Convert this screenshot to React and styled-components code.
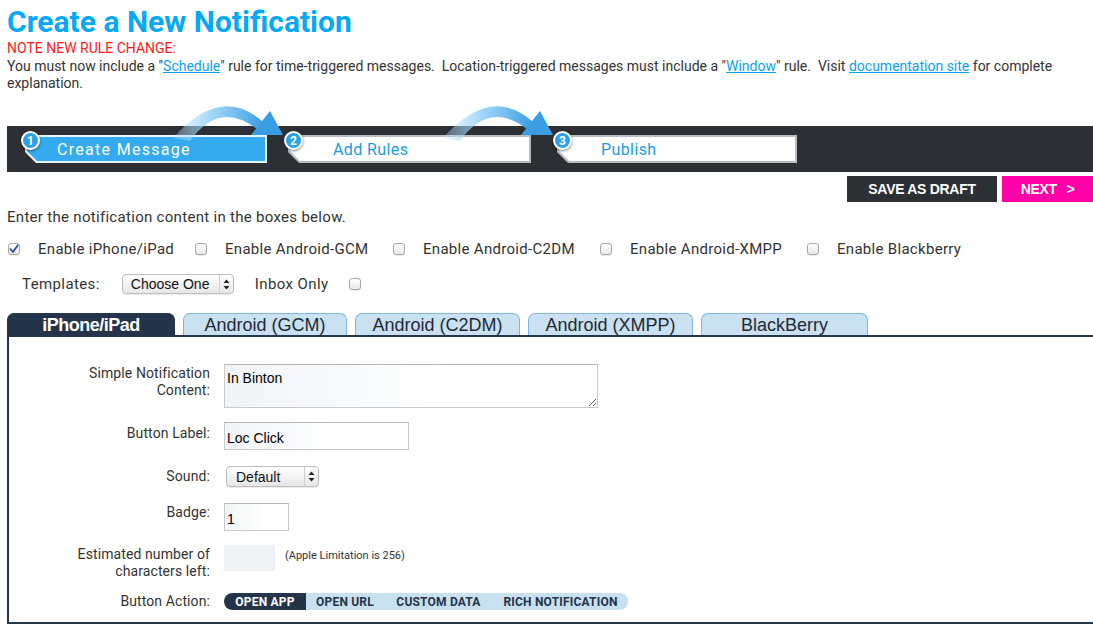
import React from 'react'
import styled, { createGlobalStyle } from 'styled-components'

const GlobalStyle = createGlobalStyle`
  html, body {
    margin: 0;
    padding: 0;
    background: #fff;
    overflow: hidden;
  }
  body {
    font-family: Roboto, "Liberation Sans", sans-serif;
    color: #333;
  }
`

const Page = styled.div`
  padding: 4px 0 0 7px;
  width: 1093px;
  box-sizing: border-box;
`

const Title = styled.h1`
  margin: 0;
  font-size: 30px;
  line-height: 36px;
  font-weight: 700;
  color: #05a9f5;
`

const Note = styled.div`
  font-size: 14px;
  line-height: 17px;
  color: #ff1a1a;
`

const Intro = styled.p`
  margin: 1px 0 0;
  font-size: 14px;
  line-height: 17px;
  color: #333;
  padding-right: 30px;

  a {
    color: #0aa3f0;
    text-decoration: underline;
  }
`

const StepBarWrap = styled.div`
  position: relative;
  margin-top: 34px;
`

const StepBar = styled.div`
  display: flex;
  align-items: center;
  height: 46px;
  background: #2c2f33;
  padding-left: 18px;
`

const StepOuter = styled.div`
  position: relative;
  width: ${p => p.$width}px;
  height: 28px;
  margin-right: ${p => p.$gap}px;
  flex-shrink: 0;
`

const StepShape = styled.div`
  height: 100%;
  background: ${p => (p.$active ? '#e9f5fd' : '#b8bcc2')};
  clip-path: polygon(0 0, 100% 0, 100% 100%, 11px 100%, 0 calc(100% - 11px));
  padding: 2px;
  box-sizing: border-box;
`

const StepInner = styled.div`
  height: 100%;
  background: ${p => (p.$active ? '#35aaee' : '#fff')};
  clip-path: polygon(0 0, 100% 0, 100% 100%, 10px 100%, 0 calc(100% - 10px));
  display: flex;
  align-items: center;
  padding-left: ${p => p.$indent}px;
  font-size: 16px;
  letter-spacing: ${p => (p.$active ? '1.3px' : '0.4px')};
  color: ${p => (p.$active ? '#fff' : '#1a9be6')};
`

const StepNum = styled.div`
  position: absolute;
  left: -4px;
  top: -4px;
  width: 15px;
  height: 15px;
  border-radius: 50%;
  background: #2aa2ea;
  border: 2px solid #fff;
  box-shadow: 0 1px 3px rgba(0, 0, 0, 0.5);
  color: #fff;
  font-size: 12px;
  font-weight: 700;
  display: flex;
  align-items: center;
  justify-content: center;
  z-index: 4;
`

const ArrowLayer = styled.svg`
  position: absolute;
  left: 0;
  top: -22px;
  pointer-events: none;
  z-index: 3;
`

const Actions = styled.div`
  display: flex;
  justify-content: flex-end;
  gap: 5px;
  margin-top: 4px;
`

const ActionButton = styled.button`
  height: 26px;
  width: ${p => p.$width}px;
  border: none;
  background: ${p => p.$bg};
  color: #fff;
  font-family: "Liberation Sans", Arial, sans-serif;
  font-weight: 700;
  font-size: 14px;
  letter-spacing: -0.3px;
  padding: 0;
  word-spacing: ${p => p.$ws || 0}px;
`

const Hint = styled.div`
  margin-top: 6px;
  font-size: 15px;
  letter-spacing: 0.3px;
  line-height: 18px;
  color: #333;
`

const PlatformRow = styled.div`
  display: flex;
  align-items: center;
  margin-top: 14px;
  height: 18px;
  padding-left: 1px;
`

const PlatformItem = styled.div`
  display: flex;
  align-items: center;
  gap: 18px;
  width: ${p => p.$width}px;
  flex-shrink: 0;
`

const Box = styled.span`
  display: inline-flex;
  align-items: center;
  justify-content: center;
  width: 12px;
  height: 12px;
  box-sizing: border-box;
  border: 1px solid #a7a7a7;
  border-radius: 3px;
  background: linear-gradient(#ffffff, #e8e8e8);
  box-shadow: 0 1px 1px rgba(0, 0, 0, 0.08);
  flex-shrink: 0;
`

const CheckLabel = styled.span`
  font-size: 15px;
  letter-spacing: 0.3px;
  color: #333;
`

const TemplateRow = styled.div`
  display: flex;
  align-items: center;
  margin-top: 16px;
  padding-left: 15px;
  height: 20px;
`

const RowLabel = styled.span`
  font-size: 15px;
  letter-spacing: 0.4px;
  color: #333;
  margin-right: ${p => p.$after}px;
`

const FakeSelect = styled.div`
  display: flex;
  align-items: stretch;
  width: ${p => p.$width}px;
  height: ${p => p.$height}px;
  box-sizing: border-box;
  border: 1px solid #bdbdbd;
  border-radius: 4px;
  background: linear-gradient(#ffffff, #e6e6e6);
  box-shadow: 0 1px 1px rgba(0, 0, 0, 0.08);
  font-family: "Liberation Sans", Arial, sans-serif;
  font-size: 14px;
  color: #111;
  margin-right: ${p => p.$after || 0}px;
  margin-left: ${p => p.$before || 0}px;
`

const SelectText = styled.span`
  flex: 1;
  display: flex;
  align-items: center;
  padding-left: ${p => p.$pad}px;
`

const SelectArrows = styled.span`
  width: 13px;
  border-left: 1px solid #cfcfcf;
  display: flex;
  align-items: center;
  justify-content: center;
`

const Tabs = styled.div`
  display: flex;
  gap: 8px;
  margin-top: 19px;
  height: 22px;
  align-items: flex-end;
`

const Tab = styled.div`
  width: ${p => p.$width}px;
  height: 22px;
  box-sizing: border-box;
  border-radius: 7px 7px 0 0;
  background: ${p => (p.$active ? '#24344a' : '#c9e1f0')};
  border: 1px solid ${p => (p.$active ? '#24344a' : '#80b6dc')};
  border-bottom: none;
  color: ${p => (p.$active ? '#fff' : '#1f2a36')};
  font-family: "Liberation Sans", Arial, sans-serif;
  font-size: 18px;
  font-weight: ${p => (p.$active ? 700 : 400)};
  letter-spacing: ${p => (p.$active ? '-0.5px' : '0')};
  display: flex;
  align-items: center;
  justify-content: center;
  line-height: 1;
  padding-top: 1px;
`

const Panel = styled.div`
  border: 2px solid #24344a;
  border-right: none;
  height: 289px;
  box-sizing: border-box;
  padding-top: 27px;
`

const Field = styled.div`
  display: flex;
  align-items: ${p => p.$align || 'flex-start'};
  margin-bottom: ${p => p.$mb}px;
`

const FieldLabel = styled.div`
  width: 201px;
  flex-shrink: 0;
  text-align: right;
  font-size: 14px;
  line-height: 17px;
  color: #333;
  letter-spacing: 0.1px;
  padding-top: ${p => p.$pt || 0}px;
  margin-right: 14px;
`

const TextArea = styled.textarea`
  width: 374px;
  height: 44px;
  box-sizing: border-box;
  border: 1px solid #c9c9c9;
  border-top-color: #b5b5b5;
  background: linear-gradient(90deg, #f1f4f6, #ffffff 60%);
  font-family: "Liberation Sans", Arial, sans-serif;
  font-size: 14px;
  color: #000;
  padding: 5px 2px;
  margin: 0;
  resize: both;
  outline: none;
`

const TextInput = styled.input`
  width: ${p => p.$width}px;
  height: ${p => p.$height}px;
  box-sizing: border-box;
  border: ${p => (p.$bare ? 'none' : '1px solid #c9c9c9')};
  border-top-color: #b5b5b5;
  background: ${p => (p.$bare ? '#eef2f5' : 'linear-gradient(90deg, #f1f4f6, #ffffff 60%)')};
  font-family: "Liberation Sans", Arial, sans-serif;
  font-size: 14px;
  color: #000;
  padding: 4px 2px 0;
  margin: 0;
  outline: none;
`

const SmallNote = styled.span`
  font-size: 11px;
  color: #333;
  margin-left: 10px;
  margin-top: 4px;
`

const Pill = styled.div`
  display: flex;
  height: 17px;
  width: 404px;
  border-radius: 8px;
  background: #c8e1f0;
  overflow: hidden;
`

const PillItem = styled.div`
  width: ${p => p.$width}px;
  display: flex;
  align-items: center;
  justify-content: center;
  font-size: 12px;
  letter-spacing: 0.2px;
  font-weight: 700;
  color: ${p => (p.$active ? '#fff' : '#24344a')};
  background: ${p => (p.$active ? '#24344a' : 'transparent')};
  border-radius: ${p => (p.$active ? '8px 0 0 8px' : '0')};
`

const Arrow = ({ dx }) => (
  <g transform={`translate(${dx} 0)`}>
    <path
      d="M 166 34 Q 214 -20 256 18 L 250 25 Q 212 -4 183 37 Z"
      fill="url(#arrowGrad)"
    />
    <path d="M 244 31 L 263 7 L 276 31 Z" fill="#3a9de4" />
  </g>
)

const steps = [
  { n: 1, label: 'Create Message', width: 242, gap: 21, indent: 30, active: true },
  { n: 2, label: 'Add Rules', width: 243, gap: 26, indent: 43 },
  { n: 3, label: 'Publish', width: 240, gap: 0, indent: 42 },
]

const platforms = [
  { label: 'Enable iPhone/iPad', checked: true, width: 187 },
  { label: 'Enable Android-GCM', width: 198 },
  { label: 'Enable Android-C2DM', width: 207 },
  { label: 'Enable Android-XMPP', width: 207 },
  { label: 'Enable Blackberry', width: 200 },
]

const tabs = [
  { label: 'iPhone/iPad', width: 168, active: true },
  { label: 'Android (GCM)', width: 164 },
  { label: 'Android (C2DM)', width: 165 },
  { label: 'Android (XMPP)', width: 165 },
  { label: 'BlackBerry', width: 167 },
]

const ArrowsIcon = () => (
  <svg width="7" height="11" viewBox="0 0 7 11">
    <path d="M3.5 0.5 L6.5 4 L0.5 4 Z" fill="#222" />
    <path d="M3.5 10.5 L6.5 7 L0.5 7 Z" fill="#222" />
  </svg>
)

const CheckBox = ({ checked }) => (
  <Box>
    {checked && (
      <svg width="10" height="10" viewBox="0 0 10 10">
        <path d="M1.5 5.2 L4 8 L8.8 1.2" fill="none" stroke="#2f4f9e" strokeWidth="1.8" strokeLinecap="round" strokeLinejoin="round" />
      </svg>
    )}
  </Box>
)

export default function App() {
  return (
    <Page>
      <GlobalStyle />
      <Title>Create a New Notification</Title>
      <Note>NOTE NEW RULE CHANGE:</Note>
      <Intro>
        You must now include a "<a href="#schedule">Schedule</a>" rule for time-triggered messages.&nbsp; Location-triggered
        messages must include a "<a href="#window">Window</a>" rule.&nbsp; Visit{' '}
        <a href="#docs">documentation site</a> for complete explanation.
      </Intro>

      <StepBarWrap>
        <StepBar>
          {steps.map(s => (
            <StepOuter key={s.n} $width={s.width} $gap={s.gap}>
              <StepNum>{s.n}</StepNum>
              <StepShape $active={s.active}>
                <StepInner $active={s.active} $indent={s.indent}>{s.label}</StepInner>
              </StepShape>
            </StepOuter>
          ))}
        </StepBar>
        <ArrowLayer width="600" height="70" viewBox="0 0 600 70">
          <defs>
            <linearGradient id="arrowGrad" x1="0" y1="0" x2="1" y2="0">
              <stop offset="0" stopColor="#bfe4fb" stopOpacity="0.3" />
              <stop offset="0.45" stopColor="#8ccdf6" stopOpacity="0.85" />
              <stop offset="1" stopColor="#3a9de4" stopOpacity="1" />
            </linearGradient>
          </defs>
          <Arrow dx={0} />
          <Arrow dx={270} />
        </ArrowLayer>
      </StepBarWrap>

      <Actions>
        <ActionButton $width={150} $bg="#2c2f33">SAVE AS DRAFT</ActionButton>
        <ActionButton $width={91} $bg="#ff00a8" $ws={6}>NEXT &gt;</ActionButton>
      </Actions>

      <Hint>Enter the notification content in the boxes below.</Hint>

      <PlatformRow>
        {platforms.map(p => (
          <PlatformItem key={p.label} $width={p.width}>
            <CheckBox checked={p.checked} />
            <CheckLabel>{p.label}</CheckLabel>
          </PlatformItem>
        ))}
      </PlatformRow>

      <TemplateRow>
        <RowLabel $after={22}>Templates:</RowLabel>
        <FakeSelect $width={112} $height={20} $after={21}>
          <SelectText $pad={8}>Choose One</SelectText>
          <SelectArrows><ArrowsIcon /></SelectArrows>
        </FakeSelect>
        <RowLabel $after={20}>Inbox Only</RowLabel>
        <CheckBox />
      </TemplateRow>

      <Tabs>
        {tabs.map(t => (
          <Tab key={t.label} $width={t.width} $active={t.active}>{t.label}</Tab>
        ))}
      </Tabs>

      <Panel>
        <Field $mb={14}>
          <FieldLabel $pt={1}>Simple Notification<br />Content:</FieldLabel>
          <TextArea readOnly defaultValue="In Binton" />
        </Field>
        <Field $mb={16}>
          <FieldLabel $pt={3}>Button Label:</FieldLabel>
          <TextInput readOnly defaultValue="Loc Click" $width={185} $height={28} />
        </Field>
        <Field $mb={16} $align="center">
          <FieldLabel>Sound:</FieldLabel>
          <FakeSelect $width={93} $height={21} $before={2}>
            <SelectText $pad={9}>Default</SelectText>
            <SelectArrows><ArrowsIcon /></SelectArrows>
          </FakeSelect>
        </Field>
        <Field $mb={14}>
          <FieldLabel $pt={1}>Badge:</FieldLabel>
          <TextInput readOnly defaultValue="1" $width={65} $height={28} />
        </Field>
        <Field $mb={13}>
          <FieldLabel $pt={1}>Estimated number of<br />characters left:</FieldLabel>
          <TextInput readOnly $bare $width={51} $height={26} />
          <SmallNote>(Apple Limitation is 256)</SmallNote>
        </Field>
        <Field $mb={0} $align="center">
          <FieldLabel>Button Action:</FieldLabel>
          <Pill>
            <PillItem $active $width={82}>OPEN APP</PillItem>
            <PillItem $width={78}>OPEN URL</PillItem>
            <PillItem $width={109}>CUSTOM DATA</PillItem>
            <PillItem $width={135}>RICH NOTIFICATION</PillItem>
          </Pill>
        </Field>
      </Panel>
    </Page>
  )
}
